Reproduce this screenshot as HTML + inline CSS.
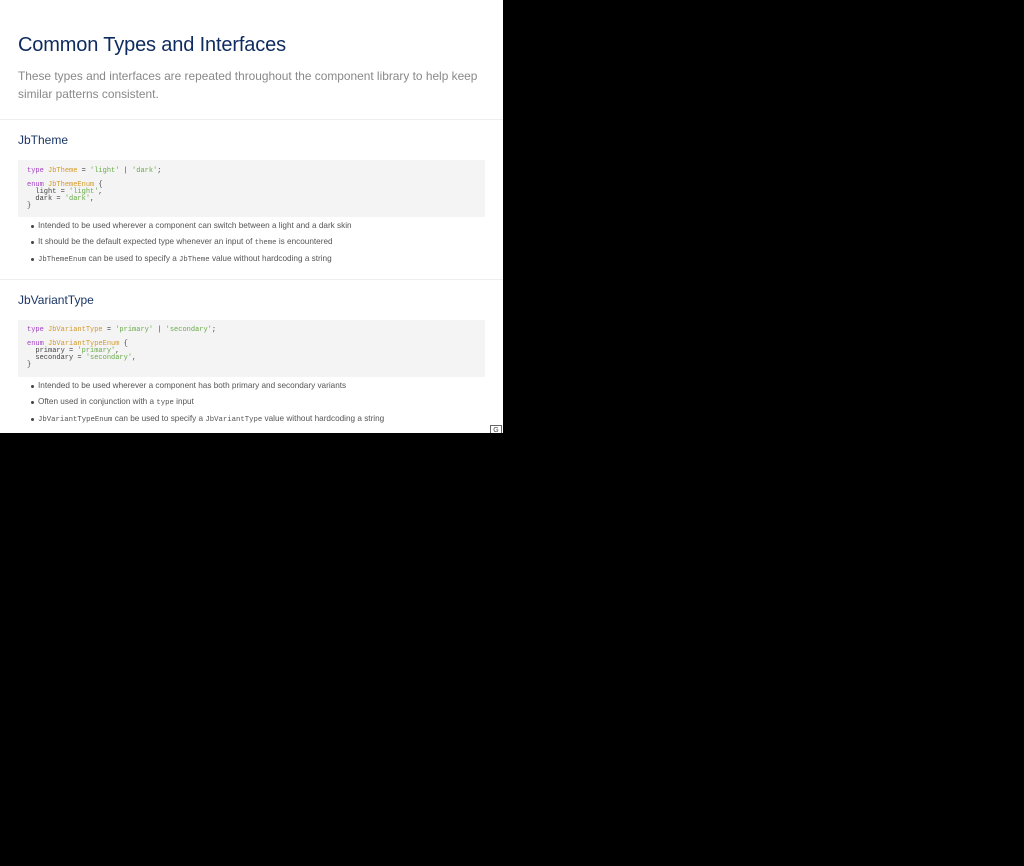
<html><head><style>
body{margin:0;background:#000;width:1024px;height:866px;overflow:hidden;font-family:"Liberation Sans",sans-serif}
#p{position:absolute;left:0;top:0;width:503px;height:433px;background:#fff;overflow:hidden}
.a{position:absolute;white-space:nowrap}
h1{position:absolute;left:18px;top:34px;margin:0;font-weight:normal;font-size:20px;color:#0d2b5e;letter-spacing:-0.15px}
.sub{left:18px;font-size:11.9px;color:#888;}
.hr{position:absolute;left:0;width:503px;height:1px;background:#eee}
h2{position:absolute;left:18px;margin:0;font-weight:normal;font-size:12px;color:#1a3566}
.code{position:absolute;left:18px;width:467px;height:57px;background:#f4f4f4}
pre{margin:0;position:absolute;left:9px;font-family:"Liberation Mono",monospace;font-size:7px;line-height:7px;color:#444}
.k{color:#a43fc4}.t{color:#d39a2a}.s{color:#6aab4a}
ul{position:absolute;left:0;margin:0;padding:0;list-style:none;font-size:8.2px;color:#555}
li{position:absolute;white-space:nowrap;left:38px}
li:before{content:"";position:absolute;left:-7px;top:4px;width:3px;height:3px;border-radius:50%;background:#444}
code{font-family:"Liberation Mono",monospace;font-size:7.3px}
</style></head><body><div id="p">
<h1>Common Types and Interfaces</h1>
<div class="a sub" style="top:69px">These types and interfaces are repeated throughout the component library to help keep</div>
<div class="a sub" style="top:87px">similar patterns consistent.</div>
<div class="hr" style="top:119px"></div>
<h2 style="top:133px">JbTheme</h2>
<div class="code" style="top:160px"><pre style="top:8px"><span class="k">type</span> <span class="t">JbTheme</span> = <span class="s">'light'</span> | <span class="s">'dark'</span>;

<span class="k">enum</span> <span class="t">JbThemeEnum</span> {
  light = <span class="s">'light'</span>,
  dark = <span class="s">'dark'</span>,
}</pre></div>
<ul style="top:221px">
<li style="top:0">Intended to be used wherever a component can switch between a light and a dark skin</li>
<li style="top:16px">It should be the default expected type whenever an input of <code>theme</code> is encountered</li>
<li style="top:33px"><code>JbThemeEnum</code> can be used to specify a <code>JbTheme</code> value without hardcoding a string</li>
</ul>
<div class="hr" style="top:279px"></div>
<h2 style="top:293px">JbVariantType</h2>
<div class="code" style="top:320px"><pre style="top:7px"><span class="k">type</span> <span class="t">JbVariantType</span> = <span class="s">'primary'</span> | <span class="s">'secondary'</span>;

<span class="k">enum</span> <span class="t">JbVariantTypeEnum</span> {
  primary = <span class="s">'primary'</span>,
  secondary = <span class="s">'secondary'</span>,
}</pre></div>
<ul style="top:381px">
<li style="top:0">Intended to be used wherever a component has both primary and secondary variants</li>
<li style="top:16px">Often used in conjunction with a <code>type</code> input</li>
<li style="top:33px"><code>JbVariantTypeEnum</code> can be used to specify a <code>JbVariantType</code> value without hardcoding a string</li>
</ul>
<div class="a" style="left:490px;top:425px;width:10px;height:10px;border:1px solid #666;font-size:7px;color:#444;text-align:center;line-height:10px;background:#fff">G</div>
</div></body></html>
